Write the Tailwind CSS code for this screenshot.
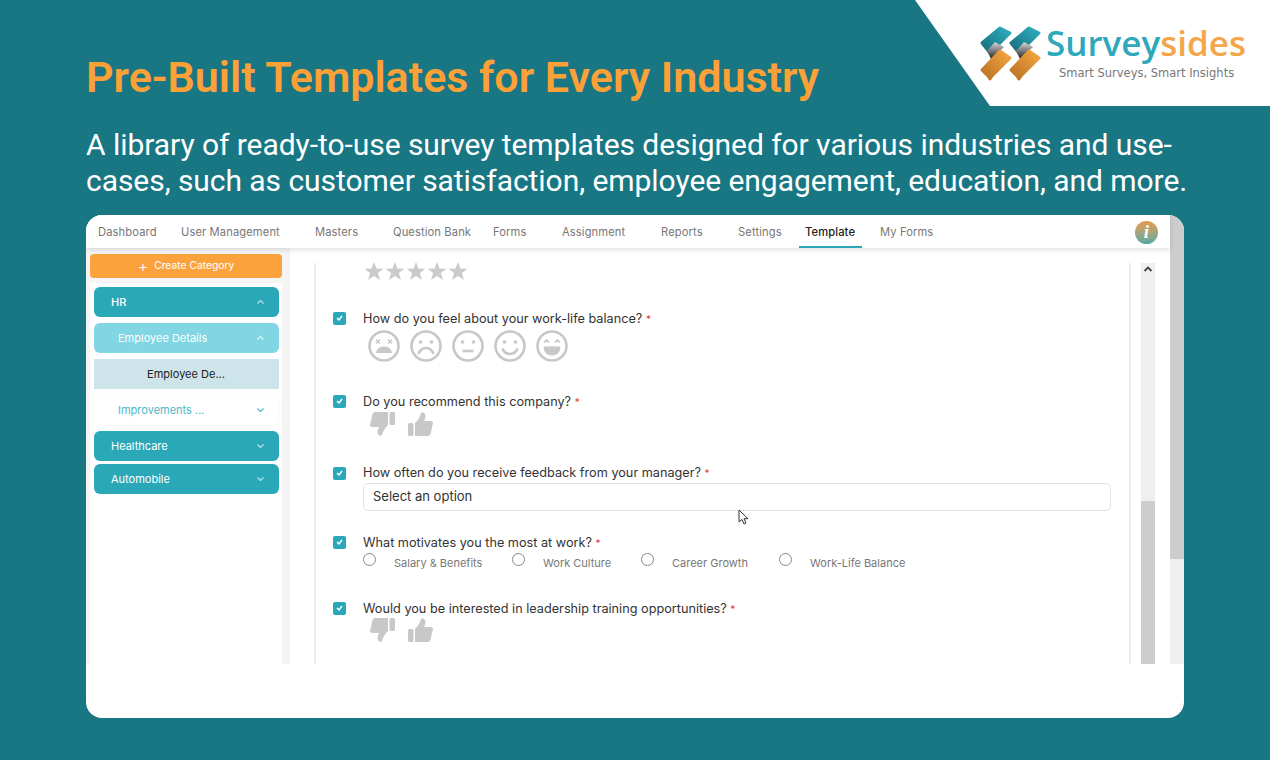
<!DOCTYPE html>
<html>
<head>
<meta charset="utf-8">
<script src="https://cdn.jsdelivr.net/npm/@tailwindcss/browser@4"></script>
</head>
<body class="m-0">
<div class="relative w-[1270px] h-[760px] overflow-hidden bg-[#197784] font-['Roboto',sans-serif]">
  <!-- Logo corner -->
  <div class="absolute top-0 right-0 w-[355px] h-[106px] bg-white [clip-path:polygon(0_0,100%_0,100%_100%,75px_100%)]"></div>
  <svg class="absolute left-[975px] top-[20px]" width="70" height="65" viewBox="975 20 70 65">
    <defs>
      <linearGradient id="t" x1="0" y1="1" x2="1" y2="0"><stop offset="0" stop-color="#176a78"/><stop offset="1" stop-color="#2eafc0"/></linearGradient>
      <linearGradient id="g" x1="0" y1="0" x2="0" y2="1"><stop offset="0" stop-color="#d8d8d8"/><stop offset="1" stop-color="#222"/></linearGradient>
      <linearGradient id="o" x1="1" y1="0" x2="0" y2="1"><stop offset="0" stop-color="#f6a840"/><stop offset="1" stop-color="#b96f24"/></linearGradient>
    </defs>
    <g stroke-linejoin="round">
      <path d="M982 43 1000 28 1010 33 990 53Z" fill="url(#t)" stroke="url(#t)" stroke-width="3"/>
      <path d="M987 51 995 42 1004 47 991 59Z" fill="url(#g)"/>
      <path d="M982 70 1000 51 1010 58 992 76 990 79 988 76Z" fill="url(#o)" stroke="url(#o)" stroke-width="3"/>
      <path d="M1011 43 1029 28 1039 33 1019 53Z" fill="url(#t)" stroke="url(#t)" stroke-width="3"/>
      <path d="M1016 51 1024 42 1033 47 1020 59Z" fill="url(#g)"/>
      <path d="M1011 70 1029 51 1039 58 1021 76 1019 79 1017 76Z" fill="url(#o)" stroke="url(#o)" stroke-width="3"/>
    </g>
  </svg>
  <div class="absolute left-[1046px] top-[21px] text-[35px] leading-[44px] font-semibold font-['Open_Sans',sans-serif] whitespace-nowrap"><span class="text-[#2ea8bb]">Survey</span><span class="text-[#f4a64a]">sides</span></div>
  <div class="absolute left-[1059px] top-[65px] text-[11.5px] leading-4 font-['DejaVu_Sans',sans-serif] text-[#777] whitespace-nowrap">Smart Surveys, Smart Insights</div>

  <!-- Heading -->
  <div class="pl-[86px] pt-[51px]">
    <h1 class="text-[43px] leading-[52px] font-semibold text-[#fba137] m-0 whitespace-nowrap">Pre-Built Templates for Every Industry</h1>
    <p class="mt-[24px] text-[30px] leading-[36px] tracking-[-0.05px] text-white whitespace-nowrap">A library of ready-to-use survey templates designed for various industries and use-<br>cases, such as customer satisfaction, employee engagement, education, and more.</p>
  </div>

  <!-- Card -->
  <div class="absolute left-[86px] top-[215px] w-[1098px] h-[503px] bg-white rounded-[16px] overflow-hidden font-['Inter',sans-serif]">
    <div class="flex h-[449px] w-full">
      <div class="flex-1 flex flex-col min-w-0">
        <!-- Nav -->
        <div class="relative z-10 h-[33px] flex items-center pl-3 pr-[12px] pt-[1px] bg-white shadow-[0_2px_5px_rgba(0,0,0,0.12)] text-[11.2px] tracking-[0.1px] text-[#777] whitespace-nowrap">
          <span class="w-[83px]">Dashboard</span>
          <span class="w-[134px]">User Management</span>
          <span class="w-[78px]">Masters</span>
          <span class="w-[100px]">Question Bank</span>
          <span class="w-[69px]">Forms</span>
          <span class="w-[99px]">Assignment</span>
          <span class="w-[77px]">Reports</span>
          <span class="w-[67px]">Settings</span>
          <span class="relative w-[75px] text-[#222] font-medium">Template<span class="absolute left-[-6px] top-[22px] w-[63px] h-[2px] bg-[#2ba8b8]"></span></span>
          <span class="flex-1">My Forms</span>
          <span class="w-[23px] h-[23px] rounded-full bg-gradient-to-b from-[#e59a45] to-[#4fa8a6] flex items-center justify-center text-white text-[19px] font-bold italic font-['Liberation_Serif',serif]">i</span>
        </div>
        <div class="flex flex-1 min-h-0">
          <!-- Sidebar -->
          <div class="w-[204px] shrink-0 bg-[#f5f5f5] pl-[4px] pt-[6px]">
            <div class="w-[192px] h-[24px] rounded-[4px] bg-[#fba23c] text-white text-[10.3px] flex items-center justify-center gap-[6px]"><span class="text-[16px] leading-[12px] font-light">+</span>Create Category</div>
            <div class="w-[192px] h-[387px] mt-[5px] bg-white pl-[4px] pr-[3px] pt-[4px] text-[11px] text-white flex flex-col">
              <div class="h-[30px] rounded-[6px] bg-[#2ba8b8] flex items-center justify-between pl-[17px] pr-[14px] font-medium">HR<svg width="9" height="6" viewBox="0 0 9 6" fill="none" stroke="#b8e6ec" stroke-width="1.2"><path d="M1.5 4.5 4.5 1.5 7.5 4.5"/></svg></div>
              <div class="h-[30px] mt-[6px] rounded-[6px] bg-[#80d6e2] flex items-center justify-between pl-[24px] pr-[14px]">Employee Details<svg width="9" height="6" viewBox="0 0 9 6" fill="none" stroke="#e0f5f8" stroke-width="1.2"><path d="M1.5 4.5 4.5 1.5 7.5 4.5"/></svg></div>
              <div class="h-[30px] mt-[6px] bg-[#cde5ea] flex items-center justify-center text-[#222] pr-[1px]">Employee De...</div>
              <div class="h-[30px] mt-[6px] rounded-[6px] flex items-center justify-between pl-[24px] pr-[14px] text-[#4db8c8] shadow-[0_0_3px_rgba(0,0,0,0.05)]">Improvements ...<svg width="9" height="6" viewBox="0 0 9 6" fill="none" stroke="#4db8c8" stroke-width="1.2"><path d="M1.5 1.5 4.5 4.5 7.5 1.5"/></svg></div>
              <div class="h-[30px] mt-[6px] rounded-[6px] bg-[#2ba8b8] flex items-center justify-between pl-[17px] pr-[14px]">Healthcare<svg width="9" height="6" viewBox="0 0 9 6" fill="none" stroke="#b8e6ec" stroke-width="1.2"><path d="M1.5 1.5 4.5 4.5 7.5 1.5"/></svg></div>
              <div class="h-[30px] mt-[3px] rounded-[6px] bg-[#2ba8b8] flex items-center justify-between pl-[17px] pr-[14px]">Automobile<svg width="9" height="6" viewBox="0 0 9 6" fill="none" stroke="#b8e6ec" stroke-width="1.2"><path d="M1.5 1.5 4.5 4.5 7.5 1.5"/></svg></div>
            </div>
          </div>
          <!-- Form -->
          <div class="flex-1 flex min-w-0 pt-[15px] pl-[24px] pr-[15px]">
            <div class="w-[817px] border-x-[2px] border-[#eeeeee] pl-[17px] text-[12.7px] text-[#333] shrink-0">
              <!-- stars -->
              <div class="ml-[31px] h-[18px] flex gap-[1px] -mt-[1px]">
                <svg width="20" height="18" viewBox="0 0 20 18" fill="#cbcbcb"><path d="M10 0 12.4 6.5 19.5 6.8 13.9 11.1 15.900 18 10 14.100 4.100 18 6.100 11.100 .5 6.800 7.600 6.500Z"/></svg>
                <svg width="20" height="18" viewBox="0 0 20 18" fill="#cbcbcb"><path d="M10 0 12.4 6.5 19.5 6.8 13.9 11.1 15.900 18 10 14.100 4.100 18 6.100 11.100 .5 6.800 7.600 6.500Z"/></svg>
                <svg width="20" height="18" viewBox="0 0 20 18" fill="#cbcbcb"><path d="M10 0 12.4 6.5 19.5 6.8 13.9 11.1 15.900 18 10 14.100 4.100 18 6.100 11.100 .5 6.800 7.600 6.500Z"/></svg>
                <svg width="20" height="18" viewBox="0 0 20 18" fill="#cbcbcb"><path d="M10 0 12.4 6.5 19.5 6.8 13.9 11.1 15.900 18 10 14.100 4.100 18 6.100 11.100 .5 6.800 7.600 6.500Z"/></svg>
                <svg width="20" height="18" viewBox="0 0 20 18" fill="#cbcbcb"><path d="M10 0 12.4 6.5 19.5 6.8 13.9 11.1 15.900 18 10 14.100 4.100 18 6.100 11.100 .5 6.800 7.600 6.500Z"/></svg>
              </div>
              <!-- Q1 -->
              <div class="mt-[31px] h-[16px] flex items-center">
                <span class="w-[13px] h-[13px] mb-[2px] rounded-[2px] bg-[#2ba8b8] flex items-center justify-center shrink-0"><svg width="7" height="6" viewBox="0 0 7 6" fill="none" stroke="#fff" stroke-width="1.4"><path d="M1 3 3 5 6 1"/></svg></span>
                <span class="ml-[17px]">How do you feel about your work-life balance? <span class="text-[#e33] text-[10px]">*</span></span>
              </div>
              <div class="mt-[3px] ml-[35px] flex gap-[10px]">
                <svg width="32" height="32" viewBox="0 0 32 32" fill="none" stroke="#c8c8c8" stroke-width="2.6"><circle cx="16" cy="16" r="14.500"/><path stroke-width="1.6" d="M8 9.500l4 4M12 9.500l-4 4M20 9.500l4 4M24 9.500l-4 4"/><path fill="#c8c8c8" stroke="none" d="M8 23c1-5 4-6.500 8-6.500s7 1.500 8 6.500z"/></svg>
                <svg width="32" height="32" viewBox="0 0 32 32" fill="none" stroke="#c8c8c8" stroke-width="2.6"><circle cx="16" cy="16" r="14.500"/><circle cx="10.500" cy="12" r="1.800" fill="#c8c8c8" stroke="none"/><circle cx="21.500" cy="12" r="1.800" fill="#c8c8c8" stroke="none"/><path d="M8.500 24c1.500-4.500 4.500-6 7.500-6s6 1.500 7.500 6"/></svg>
                <svg width="32" height="32" viewBox="0 0 32 32" fill="none" stroke="#c8c8c8" stroke-width="2.6"><circle cx="16" cy="16" r="14.500"/><circle cx="10.500" cy="12" r="1.800" fill="#c8c8c8" stroke="none"/><circle cx="21.500" cy="12" r="1.800" fill="#c8c8c8" stroke="none"/><path d="M10.500 21h11"/></svg>
                <svg width="32" height="32" viewBox="0 0 32 32" fill="none" stroke="#c8c8c8" stroke-width="2.6"><circle cx="16" cy="16" r="14.500"/><circle cx="10.500" cy="12" r="1.800" fill="#c8c8c8" stroke="none"/><circle cx="21.500" cy="12" r="1.800" fill="#c8c8c8" stroke="none"/><path d="M8.500 18.500c1.500 4 4.500 5.500 7.500 5.500s6-1.500 7.500-5.500"/></svg>
                <svg width="32" height="32" viewBox="0 0 32 32" fill="none" stroke="#c8c8c8" stroke-width="2.6"><circle cx="16" cy="16" r="14.500"/><path stroke-width="1.600" d="M8 12.500l2.500-2.500 2.500 2.500M19 12.500l2.500-2.500 2.500 2.500"/><path fill="#c8c8c8" stroke="none" d="M7.500 16.500h17c0 6-4 9-8.500 9s-8.500-3-8.500-9z"/></svg>
              </div>
              <!-- Q2 -->
              <div class="mt-[32px] h-[16px] flex items-center">
                <span class="w-[13px] h-[13px] mb-[2px] rounded-[2px] bg-[#2ba8b8] flex items-center justify-center shrink-0"><svg width="7" height="6" viewBox="0 0 7 6" fill="none" stroke="#fff" stroke-width="1.4"><path d="M1 3 3 5 6 1"/></svg></span>
                <span class="ml-[17px]">Do you recommend this company? <span class="text-[#e33] text-[10px]">*</span></span>
              </div>
              <div class="mt-[2px] ml-[37px] h-[24px] flex items-center gap-[13px]">
                <svg width="25" height="24" viewBox="0 0 25 24" fill="#c8c8c8" class="rotate-180"><path d="M0 12.500Q0 11 1.500 11H4Q5.500 11 5.500 12.500V22.500Q5.500 24 4 24H1.500Q0 24 0 22.500ZM7 11C10 8 12 5 13 1C13.500 -.5 17.500 0 17.500 4C17.500 6 16.500 8 16 9H22.500C25 9 25.500 11.500 24.500 13L22.500 22C22 23.500 20.500 24 19 24H7Z"/></svg>
                <svg width="25" height="24" viewBox="0 0 25 24" fill="#c8c8c8"><path d="M0 12.500Q0 11 1.500 11H4Q5.500 11 5.500 12.500V22.500Q5.500 24 4 24H1.500Q0 24 0 22.500ZM7 11C10 8 12 5 13 1C13.500 -.5 17.500 0 17.500 4C17.500 6 16.500 8 16 9H22.500C25 9 25.500 11.500 24.500 13L22.500 22C22 23.500 20.500 24 19 24H7Z"/></svg>
              </div>
              <!-- Q3 -->
              <div class="mt-[29px] h-[16px] flex items-center">
                <span class="w-[13px] h-[13px] rounded-[2px] bg-[#2ba8b8] flex items-center justify-center shrink-0"><svg width="7" height="6" viewBox="0 0 7 6" fill="none" stroke="#fff" stroke-width="1.4"><path d="M1 3 3 5 6 1"/></svg></span>
                <span class="ml-[17px]">How often do you receive feedback from your manager? <span class="text-[#e33] text-[10px]">*</span></span>
              </div>
              <div class="ml-[30px] mt-[2px] w-[748px] h-[28px] border border-[#e2e2e2] rounded-[5px] flex items-center pl-[9px] text-[13px] text-[#333]">Select an option</div>
              <!-- Q4 -->
              <div class="mt-[24px] h-[16px] flex items-center">
                <span class="w-[13px] h-[13px] mb-[2px] rounded-[2px] bg-[#2ba8b8] flex items-center justify-center shrink-0"><svg width="7" height="6" viewBox="0 0 7 6" fill="none" stroke="#fff" stroke-width="1.4"><path d="M1 3 3 5 6 1"/></svg></span>
                <span class="ml-[17px]">What motivates you the most at work? <span class="text-[#e33] text-[10px]">*</span></span>
              </div>
              <div class="relative ml-[30px] mt-[2px] h-[19px] flex text-[11px] text-[#777] whitespace-nowrap">
                <div class="w-[149px] flex"><span class="w-[13px] h-[13px] rounded-full border border-[#888] bg-white shrink-0"></span><span class="ml-[18px] mt-[4px] leading-[13px]">Salary &amp; Benefits</span></div>
                <div class="w-[129px] flex"><span class="w-[13px] h-[13px] rounded-full border border-[#888] bg-white shrink-0"></span><span class="ml-[18px] mt-[4px] leading-[13px]">Work Culture</span></div>
                <div class="w-[138px] flex"><span class="w-[13px] h-[13px] rounded-full border border-[#888] bg-white shrink-0"></span><span class="ml-[18px] mt-[4px] leading-[13px]">Career Growth</span></div>
                <div class="flex"><span class="w-[13px] h-[13px] rounded-full border border-[#888] bg-white shrink-0"></span><span class="ml-[18px] mt-[4px] leading-[13px]">Work-Life Balance</span></div>
              </div>
              <!-- Q5 -->
              <div class="mt-[29px] h-[16px] flex items-center">
                <span class="w-[13px] h-[13px] rounded-[2px] mb-[2px] bg-[#2ba8b8] flex items-center justify-center shrink-0"><svg width="7" height="6" viewBox="0 0 7 6" fill="none" stroke="#fff" stroke-width="1.4"><path d="M1 3 3 5 6 1"/></svg></span>
                <span class="ml-[17px]">Would you be interested in leadership training opportunities? <span class="text-[#e33] text-[10px]">*</span></span>
              </div>
              <div class="mt-[1px] ml-[37px] h-[24px] flex items-center gap-[13px]">
                <svg width="25" height="24" viewBox="0 0 25 24" fill="#c8c8c8" class="rotate-180"><path d="M0 12.500Q0 11 1.500 11H4Q5.500 11 5.500 12.500V22.500Q5.500 24 4 24H1.500Q0 24 0 22.500ZM7 11C10 8 12 5 13 1C13.500 -.5 17.500 0 17.500 4C17.500 6 16.500 8 16 9H22.500C25 9 25.500 11.500 24.500 13L22.500 22C22 23.500 20.500 24 19 24H7Z"/></svg>
                <svg width="25" height="24" viewBox="0 0 25 24" fill="#c8c8c8"><path d="M0 12.500Q0 11 1.500 11H4Q5.500 11 5.500 12.500V22.500Q5.500 24 4 24H1.500Q0 24 0 22.500ZM7 11C10 8 12 5 13 1C13.500 -.5 17.500 0 17.500 4C17.500 6 16.500 8 16 9H22.500C25 9 25.500 11.500 24.500 13L22.500 22C22 23.500 20.500 24 19 24H7Z"/></svg>
              </div>
            </div>
            <!-- inner scrollbar -->
            <div class="ml-[10px] w-[14px] shrink-0 bg-[#efefef] flex flex-col">
              <div class="h-[238px] pt-[3px] flex justify-center"><svg width="10" height="7" viewBox="0 0 10 7" fill="none" stroke="#444" stroke-width="1.800"><path d="M1.500 5 5 1.500 8.500 5"/></svg></div>
              <div class="flex-1 bg-[#cdcdcd]"></div>
            </div>
          </div>
        </div>
      </div>
      <!-- outer scrollbar -->
      <div class="w-[14px] shrink-0 bg-[#efefef] flex flex-col">
        <div class="h-[344px] bg-[#cdcdcd]"></div>
      </div>
    </div>
  </div>
  <!-- cursor -->
  <svg class="absolute left-[738px] top-[509px]" width="13" height="18" viewBox="0 0 13 18" fill="#fff" stroke="#333" stroke-width="1"><path d="M1 1v12l3-2.500 2 4.500 2-1-2-4.300h4z"/></svg>
</div>
</body>
</html>
